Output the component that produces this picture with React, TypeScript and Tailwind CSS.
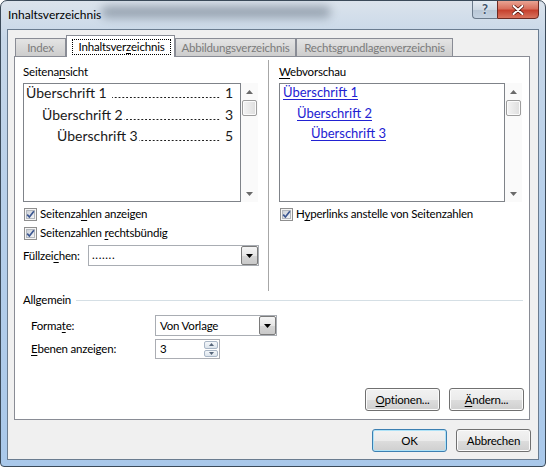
import React from 'react';

type Kids = { children: React.ReactNode };

// accelerator letter, as Windows underlines it in dialog labels
const U = ({ children }: Kids) => (
  <span className="underline decoration-1 underline-offset-[2px]">{children}</span>
);

const Arrow = ({ up = false, color = '#555555' }: { up?: boolean; color?: string }) => (
  <svg width="7" height="4" viewBox="0 0 7 4" className="block">
    <path d={up ? 'M0 4 L3.5 0 L7 4 Z' : 'M0 0 L7 0 L3.5 4 Z'} fill={color} />
  </svg>
);

const CheckBox = () => (
  <svg width="13" height="13" viewBox="0 0 13 13" className="shrink-0 block">
    <defs>
      <linearGradient id="cbInner" x1="0" y1="0" x2="1" y2="1">
        <stop offset="0" stopColor="#c9ced6" />
        <stop offset="1" stopColor="#f7f7f7" />
      </linearGradient>
    </defs>
    <rect x="0.5" y="0.5" width="12" height="12" fill="#f5f5f5" stroke="#8f8f8f" />
    <rect x="2.5" y="2.5" width="8" height="8" fill="url(#cbInner)" stroke="#b3b7bd" />
    <path d="M3.2 6.6 L5.4 9 L9.9 3.2" fill="none" stroke="#3d5892" strokeWidth="1.7" />
  </svg>
);

const ScrollBar = () => (
  <div className="w-[17px] h-full flex flex-col items-center bg-[#fafafa]">
    <div className="h-[17px] flex items-center justify-center">
      <Arrow up color="#6a6a6a" />
    </div>
    <div className="w-[15px] h-[16px] rounded-[2px] border border-[#9d9d9d] bg-gradient-to-r from-[#f4f4f4] to-[#dedede] shadow-[inset_0_0_0_1px_#fbfbfb]" />
    <div className="flex-1" />
    <div className="h-[17px] flex items-center justify-center">
      <Arrow color="#6a6a6a" />
    </div>
  </div>
);

const DropButton = () => (
  <div className="w-[17px] h-full rounded-[2px] border border-[#7a7a7a] bg-[linear-gradient(to_bottom,#f5f5f5_0%,#e6e6e6_50%,#d6d6d6_51%,#c9c9c9_100%)] flex items-center justify-center">
    <Arrow color="#000000" />
  </div>
);

const Button = ({ children, primary = false }: Kids & { primary?: boolean }) => (
  <div
    className={
      primary
        ? 'w-[75px] h-[23px] rounded-[3px] border border-[#3c7fb1] bg-[linear-gradient(to_bottom,#f2f2f2_0%,#ebebeb_50%,#dddddd_51%,#cfcfcf_100%)] shadow-[inset_0_0_0_1px_#aee2f7] flex items-center justify-center'
        : 'w-[75px] h-[23px] rounded-[3px] border border-[#707070] bg-[linear-gradient(to_bottom,#f2f2f2_0%,#ebebeb_50%,#dddddd_51%,#cfcfcf_100%)] shadow-[inset_0_0_0_1px_#fbfbfb] flex items-center justify-center'
    }
  >
    {children}
  </div>
);

// heading line of the printed TOC preview: title, dot leader, page number
const TocLine = ({ title, page, indent, spaced }: { title: string; page: string; indent: string; spaced?: boolean }) => (
  <div className={`flex whitespace-nowrap ${indent}`}>
    <span className={spaced ? 'pr-[5px]' : 'pr-px'}>{title}</span>
    <span className="flex-1 bg-[radial-gradient(circle,#1e1e1e_0.75px,transparent_1.1px)] bg-[length:3.8px_3px] bg-[position:right_0_bottom_3px] bg-repeat-x" />
    <span className="pl-[5px]">{page}</span>
  </div>
);

const tabBase =
  'h-[18px] border-l border-t border-r border-[#898c95] bg-[linear-gradient(to_bottom,#e4e4e4,#cdcdcd)] text-[#7b7b7b] flex items-center justify-center leading-[16px]';

export default function App() {
  return (
    <div className="w-[546px] h-[467px] [font-family:Lato,sans-serif] text-[11.5px] tracking-[-0.2px] leading-[16px] text-black">
      <div className="relative w-full h-full rounded-t-[7px] rounded-b-[4px] border border-[#3b4a59] bg-[linear-gradient(to_bottom,#dbe3ec_0%,#c7d7e8_8%,#b8d0ea_40%,#a9c8ea_100%)] flex flex-col overflow-hidden">
        {/* title bar */}
        <div className="relative h-[28px] flex items-start justify-between">
          <div className="absolute left-[100px] top-[5px] w-[230px] h-[12px] rounded-full bg-[#4e5c6b]/45 blur-[5px]" />
          <span className="relative pl-[7px] pt-[6px] text-[12px] tracking-normal">Inhaltsverzeichnis</span>
          <div className="relative flex mr-[6px] -mt-px">
            <div className="w-[25px] h-[19px] rounded-bl-[4px] border border-[#6b7a8b] border-r-0 bg-[linear-gradient(to_bottom,#e5ebf2_0%,#cfd9e4_50%,#b8c6d5_51%,#c4d2e1_100%)] flex items-center justify-center">
              <span className="text-[13px] font-bold text-[#44546a] leading-none [text-shadow:0_0_2px_#ffffff]">?</span>
            </div>
            <div className="w-[42px] h-[19px] rounded-br-[4px] border border-[#6d2a22] bg-[linear-gradient(to_bottom,#eaa493_0%,#d9705d_45%,#c6412e_55%,#d8735e_100%)] flex items-center justify-center">
              <svg width="12" height="10" viewBox="0 0 12 10">
                <path d="M1.5 1 L10.5 9 M10.5 1 L1.5 9" stroke="#5a1a12" strokeWidth="3.6" strokeLinecap="round" />
                <path d="M1.5 1 L10.5 9 M10.5 1 L1.5 9" stroke="#ffffff" strokeWidth="2" strokeLinecap="round" />
              </svg>
            </div>
          </div>
        </div>

        {/* client area */}
        <div className="ml-[6px] w-[532px] h-[431px] border border-[#6a7c90] bg-[#f0f0f0] flex flex-col">
          {/* tabs */}
          <div className="mt-[5px] h-[21px] flex items-end pl-[7px]">
            <div className={`${tabBase} w-[51px]`}>Index</div>
            <div className="relative z-10 w-[109px] h-[22px] -mb-px border-l border-t border-r border-[#898c95] bg-white pt-[3px] pl-[5px] pr-[3px] pb-[2px]">
              <div className="h-full border border-dotted border-black flex items-center justify-center">
                Inhaltsver<U>z</U>eichnis
              </div>
            </div>
            <div className={`${tabBase} w-[121px]`}>Abbildungsverzeichnis</div>
            <div className={`${tabBase} w-[157px]`}>Rechtsgrundlagenverzeichnis</div>
          </div>

          {/* tab panel */}
          <div className="ml-[6px] w-[516px] h-[364px] border border-[#898c95] bg-white flex flex-col">
            <div className="h-[234px] flex pl-[8px]">
              {/* print preview column */}
              <div className="w-[236px] pt-[7px] flex flex-col">
                <div>
                  Seitena<U>n</U>sicht
                </div>
                <div className="mt-[3px] h-[119px] flex">
                  <div className="w-[218px] h-full border border-[#7f8389] bg-white pl-[2px] pr-[7px] flex flex-col gap-[3.5px] text-[14px] tracking-normal leading-[18px] text-[#1a1a1a]">
                    <TocLine title="Überschrift 1" page="1" indent="" spaced />
                    <TocLine title="Überschrift 2" page="3" indent="pl-[16px]" />
                    <TocLine title="Überschrift 3" page="5" indent="pl-[31px]" />
                  </div>
                  <ScrollBar />
                </div>
                <div className="mt-[4px] pl-px flex items-center gap-[3px]">
                  <CheckBox />
                  <span>
                    Seitenza<U>h</U>len anzeigen
                  </span>
                </div>
                <div className="mt-[3px] pl-px flex items-center gap-[3px]">
                  <CheckBox />
                  <span>
                    Seitenzahlen <U>r</U>echtsbündig
                  </span>
                </div>
                <div className="mt-[4px] flex items-center">
                  <span className="w-[65px]">
                    Füllzei<U>c</U>hen:
                  </span>
                  <div className="w-[171px] h-[21px] border border-[#a9adb3] bg-white flex">
                    <span className="flex-1 pl-[3px] leading-[17px] tracking-[0.6px]">.......</span>
                    <DropButton />
                  </div>
                </div>
              </div>

              <div className="ml-[9px] mt-[3px] w-px h-[231px] bg-[#a7a7a7]" />

              {/* web preview column */}
              <div className="ml-[10px] w-[243px] pt-[7px] flex flex-col">
                <div>
                  <U>W</U>ebvorschau
                </div>
                <div className="mt-[3px] h-[119px] flex">
                  <div className="w-[226px] h-full border border-[#7f8389] bg-white pl-[3px] flex flex-col items-start gap-[4.5px] text-[13px] tracking-normal leading-[16px] text-[#2222d2]">
                    <span className="underline decoration-1 underline-offset-[2px]">Überschrift 1</span>
                    <span className="ml-[14px] underline decoration-1 underline-offset-[2px]">Überschrift 2</span>
                    <span className="ml-[28px] underline decoration-1 underline-offset-[2px]">Überschrift 3</span>
                  </div>
                  <ScrollBar />
                </div>
                <div className="mt-[4px] pl-px flex items-center gap-[3px]">
                  <CheckBox />
                  <span>
                    H<U>y</U>perlinks anstelle von Seitenzahlen
                  </span>
                </div>
              </div>
            </div>

            {/* general settings */}
            <div className="mt-px pl-[8px] pr-[6px] flex items-center">
              <span>Allgemein</span>
              <div className="ml-[5px] flex-1 h-px bg-[#d5dfe5]" />
            </div>
            <div className="mt-[7px] pl-[16px] flex items-center">
              <span className="w-[124px]">
                Forma<U>t</U>e:
              </span>
              <div className="w-[122px] h-[21px] border border-[#a9adb3] bg-white flex">
                <span className="flex-1 pl-[4px] leading-[19px]">Von Vorlage</span>
                <DropButton />
              </div>
            </div>
            <div className="mt-[3px] pl-[16px] flex items-center">
              <span className="w-[124px]">
                <U>E</U>benen anzeigen:
              </span>
              <div className="w-[65px] h-[20px] border border-[#abadb3] bg-white flex">
                <span className="flex-1 pl-[4px] leading-[18px]">3</span>
                <div className="w-[15px] flex flex-col gap-px py-px pr-px">
                  <div className="flex-1 rounded-[2px] border border-[#a9b6c6] bg-gradient-to-b from-[#f4f7fa] to-[#dce4ec] flex items-center justify-center">
                    <svg width="5" height="3" viewBox="0 0 5 3" className="block">
                      <path d="M0 3 L2.5 0 L5 3 Z" fill="#56667a" />
                    </svg>
                  </div>
                  <div className="flex-1 rounded-[2px] border border-[#a9b6c6] bg-gradient-to-b from-[#f4f7fa] to-[#dce4ec] flex items-center justify-center">
                    <svg width="5" height="3" viewBox="0 0 5 3" className="block">
                      <path d="M0 0 L5 0 L2.5 3 Z" fill="#56667a" />
                    </svg>
                  </div>
                </div>
              </div>
            </div>
            <div className="mt-[29px] pr-[5px] flex justify-end gap-[9px]">
              <Button>
                <U>O</U>ptionen...
              </Button>
              <Button>
                <U>Ä</U>ndern...
              </Button>
            </div>
          </div>

          {/* dialog buttons */}
          <div className="mt-[9px] pr-[7px] flex justify-end gap-[9px]">
            <Button primary>OK</Button>
            <Button>Abbrechen</Button>
          </div>
        </div>
      </div>
    </div>
  );
}
